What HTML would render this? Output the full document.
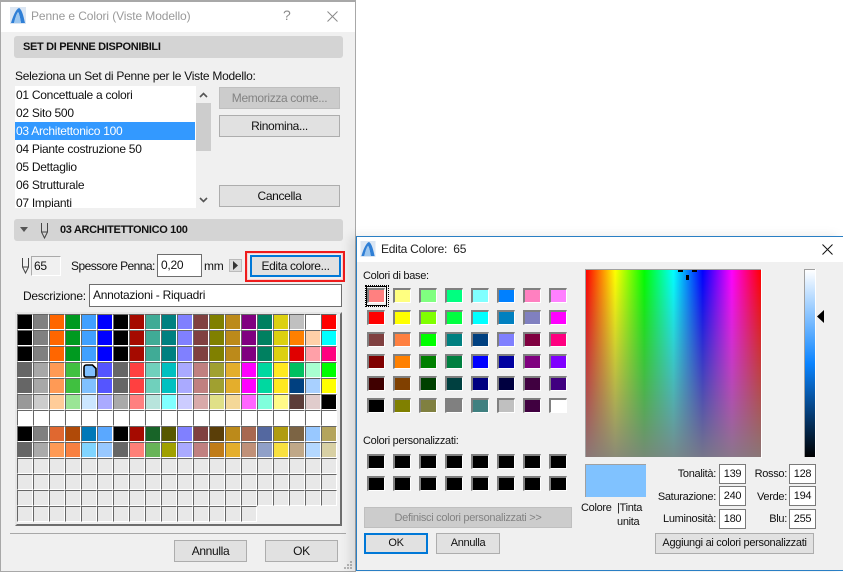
<!DOCTYPE html>
<html><head><meta charset="utf-8"><style>
html,body{margin:0;padding:0}
body{width:843px;height:572px;position:relative;overflow:hidden;background:#fff;font:12px/14px "Liberation Sans",sans-serif;color:#111;letter-spacing:-.27px}
div,span,b{position:absolute;box-sizing:border-box;white-space:nowrap}
svg{position:absolute;overflow:visible}
.h{left:14px;width:329px;height:22px;background:#d4d4d4;border-radius:3px}
.t{line-height:14px}
.b{background:#e1e1e1;border:1px solid #adadad;outline:0;text-align:center;line-height:20px}
.d{background:#cccccc;border:1px solid #bfbfbf;color:#838383;text-align:center;line-height:20px}
.w{background:#fff;border:1px solid #6e6e6e}
.g{left:17px;top:314px;width:320px;display:grid;grid-template-columns:repeat(20,16px);grid-auto-rows:16px;position:absolute}
.g i{display:block;box-sizing:border-box;border-left:1px solid #666;border-top:1px solid #666;border-right:1px solid #fff;border-bottom:1px solid #fff}
.s{width:18px;height:15px;border-top:2px solid #808080;border-left:2px solid #808080;border-right:1px solid #fff;border-bottom:1px solid #fff}
.r{text-align:right;width:70px}
.f{width:27px;height:20px;background:#fff;border:1px solid #7a7a7a;text-align:center;line-height:18px}
.bb{letter-spacing:-.33px;font-size:11px}
.btn1{letter-spacing:-.35px}
#d2{left:0;top:0;width:843px;height:572px;font-size:11px;letter-spacing:-.3px}
</style></head><body>

<!-- WINDOW 1 -->
<div style="left:0;top:0;width:356px;height:572px;background:#f0f0f0;border:1px solid #a8a8a8;border-width:2px 1px 1px 1px"></div>
<div style="left:1px;top:2px;width:354px;height:30px;background:#fff"></div>
<svg style="left:10px;top:7px" width="16" height="17" viewBox="0 0 16 17"><rect width="16" height="17" fill="#dbe6f3"/><path d="M1 16 C3 9 6 2 9 1 C12 2 14 11 15 16 L11 16 C10 10 9 6 8 5 C6 8 5 12 4 16 Z" fill="#2f7fd6"/><path d="M8 5 C9 6 10 10 11 16 L4 16 C5 12 6 8 8 5Z" fill="#9cc6ee"/></svg>
<div class="t" style="left:31px;top:9px;color:#9a9a9a;letter-spacing:-.1px">Penne e Colori (Viste Modello)</div>
<div class="t" style="left:283px;top:8px;font-size:14px;color:#8a8a8a">?</div>
<svg style="left:327px;top:11px" width="11" height="11"><path d="M.5 .5L10.5 10.5M10.5 .5L.5 10.5" stroke="#8a8a8a" fill="none"/></svg>

<div class="h" style="top:36px"></div>
<b class="t bb" style="left:23px;top:40px">SET DI PENNE DISPONIBILI</b>
<div class="t" style="left:15px;top:69px">Seleziona un Set di Penne per le Viste Modello:</div>

<div style="left:15px;top:86px;width:181px;height:122px;background:#fff;overflow:hidden">
<div style="left:0;top:36px;width:180px;height:18px;background:#3399ff"></div>
<div class="t" style="left:1px;top:2px">01 Concettuale a colori</div>
<div class="t" style="left:1px;top:20px">02 Sito 500</div>
<div class="t" style="left:1px;top:38px;color:#fff">03 Architettonico 100</div>
<div class="t" style="left:1px;top:56px">04 Piante costruzione 50</div>
<div class="t" style="left:1px;top:74px">05 Dettaglio</div>
<div class="t" style="left:1px;top:92px">06 Strutturale</div>
<div class="t" style="left:1px;top:110px">07 Impianti</div>
</div>
<div style="left:196px;top:103px;width:15px;height:48px;background:#cdcdcd"></div>
<svg style="left:199px;top:92px" width="9" height="6"><path d="M1 5L4.5 1.5L8 5" stroke="#555" stroke-width="1.6" fill="none"/></svg>
<svg style="left:199px;top:197px" width="9" height="6"><path d="M1 1L4.5 4.5L8 1" stroke="#555" stroke-width="1.6" fill="none"/></svg>

<div class="d btn1" style="left:219px;top:87px;width:121px;height:22px">Memorizza come...</div>
<div class="b btn1" style="left:219px;top:115px;width:121px;height:22px">Rinomina...</div>
<div class="b btn1" style="left:219px;top:185px;width:121px;height:22px">Cancella</div>

<div class="h" style="top:219px"></div>
<svg style="left:20px;top:227px" width="8" height="5"><path d="M0 0H8L4 5Z" fill="#555"/></svg>
<svg style="left:40px;top:223px" width="9" height="16"><path d="M1.5 0V9L4.5 15L7.5 9V0M1.5 9H7.5" stroke="#444" fill="none"/></svg>
<b class="t bb" style="left:60px;top:223px">03 ARCHITETTONICO 100</b>

<svg style="left:21px;top:258px" width="9" height="16"><path d="M1.5 0V9L4.5 15L7.5 9V0M1.5 9H7.5" stroke="#444" fill="none"/></svg>
<div style="left:31px;top:256px;width:30px;height:20px;border:1px solid #fff;border-top-color:#aaa;border-left-color:#aaa;line-height:18px;padding-left:2px">65</div>
<div class="t" style="left:71px;top:259px;letter-spacing:-.55px">Spessore Penna:</div>
<div class="w" style="left:157px;top:254px;width:45px;height:23px;padding-left:3px;line-height:21px">0,20</div>
<div class="t" style="left:204px;top:259px">mm</div>
<div style="left:229px;top:259px;width:13px;height:13px;background:#dcdcdc;border:1px solid #bbb"></div>
<svg style="left:233px;top:261px" width="6" height="9"><path d="M0 0L5 4.5L0 9Z" fill="#333"/></svg>
<div style="left:245px;top:251px;width:100px;height:31px;border:2px solid #ee1c1c;outline:0;box-shadow:inset 0 0 0 1px #f8d0d0"></div>
<div class="b btn1" style="left:250px;top:255px;width:91px;height:22px;border:2px solid #0078d7;line-height:18px">Edita colore...</div>

<div class="t" style="left:23px;top:289px">Descrizione:</div>
<div class="w" style="left:89px;top:284px;width:253px;height:23px;padding-left:3px;line-height:21px">Annotazioni - Riquadri</div>

<div style="left:15px;top:312px;width:327px;height:214px;background:#f0f0f0;border:2px solid #6e6e6e;border-top-color:#e6e6e6;border-left-color:#e6e6e6;border-bottom-width:2px"></div>
<div class="g">
<i style="background:#000"></i><i style="background:#808080"></i><i style="background:#f60"></i><i style="background:#009a20"></i><i style="background:#40a0ff"></i><i style="background:#00f"></i><i style="background:#000"></i><i style="background:#a50a00"></i><i style="background:#40ab96"></i><i style="background:#008080"></i><i style="background:#8080ff"></i><i style="background:#804040"></i><i style="background:#808000"></i><i style="background:#bc8a1a"></i><i style="background:#800080"></i><i style="background:#008060"></i><i style="background:#dcd010"></i><i style="background:#c0c0c0"></i><i style="background:#fff"></i><i style="background:#f00"></i>
<i style="background:#000"></i><i style="background:#808080"></i><i style="background:#f60"></i><i style="background:#009a20"></i><i style="background:#40a0ff"></i><i style="background:#00f"></i><i style="background:#000"></i><i style="background:#a50a00"></i><i style="background:#40ab96"></i><i style="background:#008080"></i><i style="background:#8080ff"></i><i style="background:#804040"></i><i style="background:#808000"></i><i style="background:#bc8a1a"></i><i style="background:#800080"></i><i style="background:#008060"></i><i style="background:#dcd010"></i><i style="background:#ff8000"></i><i style="background:#ffd0a8"></i><i style="background:#0ff"></i>
<i style="background:#000"></i><i style="background:#808080"></i><i style="background:#f60"></i><i style="background:#009a20"></i><i style="background:#40a0ff"></i><i style="background:#00f"></i><i style="background:#000"></i><i style="background:#a50a00"></i><i style="background:#40ab96"></i><i style="background:#008080"></i><i style="background:#8080ff"></i><i style="background:#804040"></i><i style="background:#808000"></i><i style="background:#bc8a1a"></i><i style="background:#800080"></i><i style="background:#008060"></i><i style="background:#dcd010"></i><i style="background:#e00000"></i><i style="background:#ffa0a8"></i><i style="background:#ff0080"></i>
<i style="background:#666"></i><i style="background:#a8a8a8"></i><i style="background:#ff9a55"></i><i style="background:#40c040"></i><i style="background:#fff"></i><i style="background:#55f"></i><i style="background:#666"></i><i style="background:#ff4040"></i><i style="background:#70d0bc"></i><i style="background:#00c0c0"></i><i style="background:#aaf"></i><i style="background:#c08080"></i><i style="background:#a0a030"></i><i style="background:#e4ae2c"></i><i style="background:#f0f"></i><i style="background:#00d8a0"></i><i style="background:#ffe820"></i><i style="background:#00c060"></i><i style="background:#a8ffd0"></i><i style="background:#0f0"></i>
<i style="background:#666"></i><i style="background:#a8a8a8"></i><i style="background:#ff9a55"></i><i style="background:#40c040"></i><i style="background:#80c0ff"></i><i style="background:#55f"></i><i style="background:#666"></i><i style="background:#ff4040"></i><i style="background:#70d0bc"></i><i style="background:#00c0c0"></i><i style="background:#aaf"></i><i style="background:#c08080"></i><i style="background:#a0a030"></i><i style="background:#e4ae2c"></i><i style="background:#f0f"></i><i style="background:#00d8a0"></i><i style="background:#ffe820"></i><i style="background:#004080"></i><i style="background:#a8d0ff"></i><i style="background:#ff0"></i>
<i style="background:#999"></i><i style="background:#ccc"></i><i style="background:#fc9"></i><i style="background:#9ae596"></i><i style="background:#cce6ff"></i><i style="background:#aaf"></i><i style="background:#aaa"></i><i style="background:#ff8080"></i><i style="background:#b8e4dc"></i><i style="background:#80ffff"></i><i style="background:#ccf"></i><i style="background:#d8aaaa"></i><i style="background:#e0e088"></i><i style="background:#f4d898"></i><i style="background:#f6f"></i><i style="background:#80ffdc"></i><i style="background:#fffa88"></i><i style="background:#5c3c38"></i><i style="background:#e0cccc"></i><i style="background:#000"></i>
<i style="background:#fff"></i><i style="background:#fff"></i><i style="background:#fff"></i><i style="background:#fff"></i><i style="background:#fff"></i><i style="background:#fff"></i><i style="background:#fff"></i><i style="background:#fff"></i><i style="background:#fff"></i><i style="background:#fff"></i><i style="background:#fff"></i><i style="background:#fff"></i><i style="background:#fff"></i><i style="background:#fff"></i><i style="background:#fff"></i><i style="background:#fff"></i><i style="background:#fff"></i><i style="background:#fff"></i><i style="background:#fff"></i><i style="background:#fff"></i>
<i style="background:#000"></i><i style="background:#808080"></i><i style="background:#e06830"></i><i style="background:#b04a08"></i><i style="background:#0078b8"></i><i style="background:#5aa8ff"></i><i style="background:#000"></i><i style="background:#a50a00"></i><i style="background:#186428"></i><i style="background:#585800"></i><i style="background:#8080ff"></i><i style="background:#804040"></i><i style="background:#5a3e08"></i><i style="background:#bc8a1a"></i><i style="background:#a86850"></i><i style="background:#5468a0"></i><i style="background:#b09c10"></i><i style="background:#7c6444"></i><i style="background:#98c8ff"></i><i style="background:#b4a45c"></i>
<i style="background:#666"></i><i style="background:#aaa"></i><i style="background:#ff9a55"></i><i style="background:#f88040"></i><i style="background:#80d4ff"></i><i style="background:#98c8ff"></i><i style="background:#666"></i><i style="background:#ff8078"></i><i style="background:#68b458"></i><i style="background:#a0a000"></i><i style="background:#aaf"></i><i style="background:#c08080"></i><i style="background:#c07c18"></i><i style="background:#e4ae2c"></i><i style="background:#c09078"></i><i style="background:#90a0c8"></i><i style="background:#f8e040"></i><i style="background:#c0a888"></i><i style="background:#b4d8ff"></i><i style="background:#d8d0a4"></i>
<i style="background:#e8e8e8"></i><i style="background:#e8e8e8"></i><i style="background:#e8e8e8"></i><i style="background:#e8e8e8"></i><i style="background:#e8e8e8"></i><i style="background:#e8e8e8"></i><i style="background:#e8e8e8"></i><i style="background:#e8e8e8"></i><i style="background:#e8e8e8"></i><i style="background:#e8e8e8"></i><i style="background:#e8e8e8"></i><i style="background:#e8e8e8"></i><i style="background:#e8e8e8"></i><i style="background:#e8e8e8"></i><i style="background:#e8e8e8"></i><i style="background:#e8e8e8"></i><i style="background:#e8e8e8"></i><i style="background:#e8e8e8"></i><i style="background:#e8e8e8"></i><i style="background:#e8e8e8"></i>
<i style="background:#e8e8e8"></i><i style="background:#e8e8e8"></i><i style="background:#e8e8e8"></i><i style="background:#e8e8e8"></i><i style="background:#e8e8e8"></i><i style="background:#e8e8e8"></i><i style="background:#e8e8e8"></i><i style="background:#e8e8e8"></i><i style="background:#e8e8e8"></i><i style="background:#e8e8e8"></i><i style="background:#e8e8e8"></i><i style="background:#e8e8e8"></i><i style="background:#e8e8e8"></i><i style="background:#e8e8e8"></i><i style="background:#e8e8e8"></i><i style="background:#e8e8e8"></i><i style="background:#e8e8e8"></i><i style="background:#e8e8e8"></i><i style="background:#e8e8e8"></i><i style="background:#e8e8e8"></i>
<i style="background:#e8e8e8"></i><i style="background:#e8e8e8"></i><i style="background:#e8e8e8"></i><i style="background:#e8e8e8"></i><i style="background:#e8e8e8"></i><i style="background:#e8e8e8"></i><i style="background:#e8e8e8"></i><i style="background:#e8e8e8"></i><i style="background:#e8e8e8"></i><i style="background:#e8e8e8"></i><i style="background:#e8e8e8"></i><i style="background:#e8e8e8"></i><i style="background:#e8e8e8"></i><i style="background:#e8e8e8"></i><i style="background:#e8e8e8"></i><i style="background:#e8e8e8"></i><i style="background:#e8e8e8"></i><i style="background:#e8e8e8"></i><i style="background:#e8e8e8"></i><i style="background:#e8e8e8"></i>
<i style="background:#e8e8e8"></i><i style="background:#e8e8e8"></i><i style="background:#e8e8e8"></i><i style="background:#e8e8e8"></i><i style="background:#e8e8e8"></i><i style="background:#e8e8e8"></i><i style="background:#e8e8e8"></i><i style="background:#e8e8e8"></i><i style="background:#e8e8e8"></i><i style="background:#e8e8e8"></i><i style="background:#e8e8e8"></i><i style="background:#e8e8e8"></i><i style="background:#e8e8e8"></i><i style="background:#e8e8e8"></i><i style="background:#e8e8e8"></i>
</div>
<svg style="left:83px;top:364px" width="14" height="14"><path d="M3.5 1H9.5L13 4.5V11.5Q13 13 11.5 13H3Q1 13 1 11V3.5Q1 1 3.5 1Z" fill="#80c0ff" stroke="#000" stroke-width="1.6"/></svg>

<div style="left:10px;top:533px;width:336px;height:1px;background:#a8a8a8"></div>
<div class="b btn1" style="left:174px;top:540px;width:73px;height:22px;border-width:1.5px">Annulla</div>
<div class="b btn1" style="left:265px;top:540px;width:73px;height:22px;border-width:1.5px">OK</div>
<svg style="left:344px;top:561px" width="9" height="9" fill="#b4b4b4"><rect x="6" width="2" height="2"/><rect x="3" y="3" width="2" height="2"/><rect x="6" y="3" width="2" height="2"/><rect y="6" width="2" height="2"/><rect x="3" y="6" width="2" height="2"/><rect x="6" y="6" width="2" height="2"/></svg>

<!-- DIALOG 2 -->
<div id="d2">
<div style="left:356px;top:236px;width:487px;height:335px;background:#f0f0f0;border:1px solid #2a7fc4;border-right:0;box-shadow:-6px 0 10px rgba(0,0,0,.1)"></div>
<div style="left:357px;top:237px;width:486px;height:25px;background:#fff"></div>
<svg style="left:360px;top:241px" width="16" height="16" viewBox="0 0 16 17"><rect width="16" height="17" fill="#dbe6f3"/><path d="M1 16 C3 9 6 2 9 1 C12 2 14 11 15 16 L11 16 C10 10 9 6 8 5 C6 8 5 12 4 16 Z" fill="#2f7fd6"/><path d="M8 5 C9 6 10 10 11 16 L4 16 C5 12 6 8 8 5Z" fill="#9cc6ee"/></svg>
<div class="t" style="left:381px;top:242px;color:#222;white-space:pre;font-size:12px;letter-spacing:-.25px">Edita Colore:  65</div>
<svg style="left:822px;top:244px" width="11" height="11"><path d="M.5 .5L10.5 10.5M10.5 .5L.5 10.5" stroke="#111" fill="none"/></svg>
<div class="t" style="left:363px;top:269px">Colori di base:</div>

<div class="s" style="left:367px;top:288px;background:#ff8080"></div><div class="s" style="left:393px;top:288px;background:#ffff80"></div><div class="s" style="left:419px;top:288px;background:#80ff80"></div><div class="s" style="left:445px;top:288px;background:#00ff80"></div><div class="s" style="left:471px;top:288px;background:#80ffff"></div><div class="s" style="left:497px;top:288px;background:#0080ff"></div><div class="s" style="left:523px;top:288px;background:#ff80c0"></div><div class="s" style="left:549px;top:288px;background:#ff80ff"></div>
<div class="s" style="left:367px;top:310px;background:#ff0000"></div><div class="s" style="left:393px;top:310px;background:#ffff00"></div><div class="s" style="left:419px;top:310px;background:#80ff00"></div><div class="s" style="left:445px;top:310px;background:#00ff40"></div><div class="s" style="left:471px;top:310px;background:#00ffff"></div><div class="s" style="left:497px;top:310px;background:#0080c0"></div><div class="s" style="left:523px;top:310px;background:#8080c0"></div><div class="s" style="left:549px;top:310px;background:#ff00ff"></div>
<div class="s" style="left:367px;top:332px;background:#804040"></div><div class="s" style="left:393px;top:332px;background:#ff8040"></div><div class="s" style="left:419px;top:332px;background:#00ff00"></div><div class="s" style="left:445px;top:332px;background:#008080"></div><div class="s" style="left:471px;top:332px;background:#004080"></div><div class="s" style="left:497px;top:332px;background:#8080ff"></div><div class="s" style="left:523px;top:332px;background:#800040"></div><div class="s" style="left:549px;top:332px;background:#ff0080"></div>
<div class="s" style="left:367px;top:354px;background:#800000"></div><div class="s" style="left:393px;top:354px;background:#ff8000"></div><div class="s" style="left:419px;top:354px;background:#008000"></div><div class="s" style="left:445px;top:354px;background:#008040"></div><div class="s" style="left:471px;top:354px;background:#0000ff"></div><div class="s" style="left:497px;top:354px;background:#0000a0"></div><div class="s" style="left:523px;top:354px;background:#800080"></div><div class="s" style="left:549px;top:354px;background:#8000ff"></div>
<div class="s" style="left:367px;top:376px;background:#400000"></div><div class="s" style="left:393px;top:376px;background:#804000"></div><div class="s" style="left:419px;top:376px;background:#004000"></div><div class="s" style="left:445px;top:376px;background:#004040"></div><div class="s" style="left:471px;top:376px;background:#000080"></div><div class="s" style="left:497px;top:376px;background:#000040"></div><div class="s" style="left:523px;top:376px;background:#400040"></div><div class="s" style="left:549px;top:376px;background:#400080"></div>
<div class="s" style="left:367px;top:398px;background:#000000"></div><div class="s" style="left:393px;top:398px;background:#808000"></div><div class="s" style="left:419px;top:398px;background:#808040"></div><div class="s" style="left:445px;top:398px;background:#808080"></div><div class="s" style="left:471px;top:398px;background:#408080"></div><div class="s" style="left:497px;top:398px;background:#c0c0c0"></div><div class="s" style="left:523px;top:398px;background:#400040"></div><div class="s" style="left:549px;top:398px;background:#ffffff"></div>
<div style="left:366px;top:286px;width:21px;height:20px;border:1px solid #000"></div>
<div style="left:365px;top:285px;width:24px;height:22px;border:1px dotted #000"></div>

<div class="t" style="left:363px;top:434px">Colori personalizzati:</div>
<div class="s" style="left:367px;top:454px;background:#000"></div><div class="s" style="left:393px;top:454px;background:#000"></div><div class="s" style="left:419px;top:454px;background:#000"></div><div class="s" style="left:445px;top:454px;background:#000"></div><div class="s" style="left:471px;top:454px;background:#000"></div><div class="s" style="left:497px;top:454px;background:#000"></div><div class="s" style="left:523px;top:454px;background:#000"></div><div class="s" style="left:549px;top:454px;background:#000"></div>
<div class="s" style="left:367px;top:476px;background:#000"></div><div class="s" style="left:393px;top:476px;background:#000"></div><div class="s" style="left:419px;top:476px;background:#000"></div><div class="s" style="left:445px;top:476px;background:#000"></div><div class="s" style="left:471px;top:476px;background:#000"></div><div class="s" style="left:497px;top:476px;background:#000"></div><div class="s" style="left:523px;top:476px;background:#000"></div><div class="s" style="left:549px;top:476px;background:#000"></div>

<div class="d" style="left:364px;top:507px;width:208px;height:21px;line-height:20px">Definisci colori personalizzati &gt;&gt;</div>
<div class="b" style="left:364px;top:533px;width:64px;height:21px;border:2px solid #0078d7;line-height:17px">OK</div>
<div class="b" style="left:436px;top:533px;width:64px;height:21px;line-height:19px">Annulla</div>

<svg style="left:585px;top:269px" width="177" height="189">
<defs>
<linearGradient id="hue" x1="0" x2="1" y1="0" y2="0"><stop offset="0" stop-color="#f00"/><stop offset=".1667" stop-color="#ff0"/><stop offset=".3333" stop-color="#0f0"/><stop offset=".5" stop-color="#0ff"/><stop offset=".6667" stop-color="#00f"/><stop offset=".8333" stop-color="#f0f"/><stop offset="1" stop-color="#f00"/></linearGradient>
<linearGradient id="sat" x1="0" x2="0" y1="0" y2="1"><stop offset="0" stop-color="#808080" stop-opacity="0"/><stop offset="1" stop-color="#808080" stop-opacity=".92"/></linearGradient>
<linearGradient id="lum" x1="0" x2="0" y1="0" y2="1"><stop offset="0" stop-color="#fff"/><stop offset=".5" stop-color="#0a84ff"/><stop offset="1" stop-color="#000"/></linearGradient>
</defs>
<rect x="0" y="0" width="176" height="188" fill="#a0a0a0"/>
<rect x="1" y="1" width="175" height="187" fill="url(#hue)"/>
<rect x="1" y="1" width="175" height="187" fill="url(#sat)"/>
<rect x="176" y="0" width="1" height="189" fill="#fff"/>
<rect x="93" y="1" width="5" height="2" fill="#000"/><rect x="107" y="1" width="5" height="2" fill="#000"/><rect x="101" y="6" width="3" height="5" fill="#000"/>
</svg>
<svg style="left:804px;top:269px" width="21" height="189">
<rect x="0" y="0" width="12" height="188" fill="#fff"/><rect x="0" y="0" width="11" height="1" fill="#a0a0a0"/><rect x="0" y="0" width="1" height="188" fill="#a0a0a0"/>
<rect x="1" y="1" width="10" height="187" fill="url(#lum)"/>
<path d="M13 47.5L20 41V54Z" fill="#000"/>
</svg>

<div style="left:585px;top:464px;width:61px;height:33px;background:#80c2ff;border-top:1px solid #a0a0a0;border-left:1px solid #a0a0a0"></div>
<div class="t" style="left:581px;top:501px">Colore</div>
<div class="t" style="left:617px;top:501px">|Tinta</div>
<div class="t" style="left:617px;top:515px">unita</div>

<div class="t r" style="left:646px;top:467px">Tonalità:</div>
<div class="t r" style="left:646px;top:490px">Saturazione:</div>
<div class="t r" style="left:646px;top:512px">Luminosità:</div>
<div class="f" style="left:719px;top:464px">139</div>
<div class="f" style="left:719px;top:486px">240</div>
<div class="f" style="left:719px;top:509px">180</div>
<div class="t r" style="left:717px;top:467px">Rosso:</div>
<div class="t r" style="left:717px;top:490px">Verde:</div>
<div class="t r" style="left:717px;top:512px">Blu:</div>
<div class="f" style="left:789px;top:464px">128</div>
<div class="f" style="left:789px;top:486px">194</div>
<div class="f" style="left:789px;top:509px">255</div>
<div class="b" style="left:655px;top:533px;width:159px;height:21px;line-height:19px">Aggiungi ai colori personalizzati</div>
</div>
</body></html>
